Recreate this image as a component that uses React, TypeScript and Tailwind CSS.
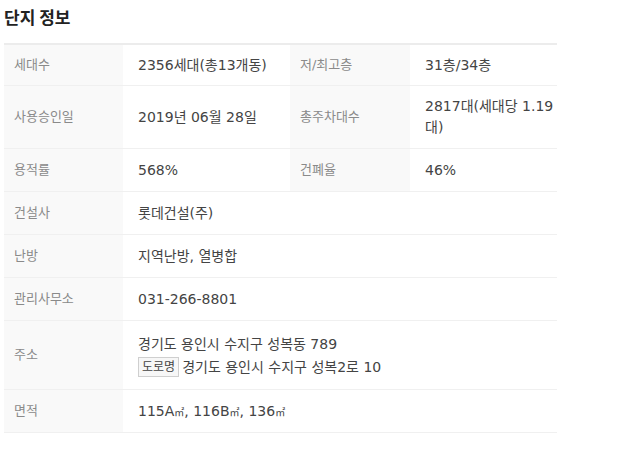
const FONT = "font-['DejaVu_Sans','Noto_Sans_CJK_KR',sans-serif]";

type Cell = { label: string; value: React.ReactNode };

function Label({ children }: { children: React.ReactNode }) {
  return (
    <div className="bg-[#f9f9f9] pl-[10px] flex items-center text-[13px] text-[#8a8a8a]">{children}</div>
  );
}

function Value({ children, wide }: { children: React.ReactNode; wide?: boolean }) {
  return (
    <div className={`pl-[15px] pr-2 flex items-center text-[14px] text-[#444] ${wide ? "col-span-3" : ""}`}>
      {children}
    </div>
  );
}

function Row({ cells, h }: { cells: Cell[]; h: string }) {
  return (
    <div className={`grid grid-cols-[119px_167px_120px_147px] border-b border-[#f0f0f0] ${h}`}>
      {cells.map((c) => (
        <>
          <Label key={c.label}>{c.label}</Label>
          <Value wide={cells.length === 1}>{c.value}</Value>
        </>
      ))}
    </div>
  );
}

export default function App() {
  return (
    <div className={`w-[640px] h-[450px] bg-white px-[4px] pt-[5px] ${FONT}`}>
      <h2 className="text-[17px] font-bold text-[#222] leading-[24px] font-['Noto_Sans_CJK_KR',sans-serif]">
        단지 정보
      </h2>
      <div className="mt-[14px] w-[553px] border-t-2 border-[#ececec]">
        <Row
          h="h-[41px]"
          cells={[
            { label: "세대수", value: "2356세대(총13개동)" },
            { label: "저/최고층", value: "31층/34층" },
          ]}
        />
        <Row
          h="h-[63px]"
          cells={[
            { label: "사용승인일", value: "2019년 06월 28일" },
            {
              label: "총주차대수",
              value: (
                <span className="leading-[21px] whitespace-nowrap">
                  2817대(세대당 1.19
                  <br />
                  대)
                </span>
              ),
            },
          ]}
        />
        <Row
          h="h-[43px]"
          cells={[
            { label: "용적률", value: "568%" },
            { label: "건폐율", value: "46%" },
          ]}
        />
        <Row h="h-[43px]" cells={[{ label: "건설사", value: "롯데건설(주)" }]} />
        <Row h="h-[43px]" cells={[{ label: "난방", value: "지역난방, 열병합" }]} />
        <Row h="h-[43px]" cells={[{ label: "관리사무소", value: "031-266-8801" }]} />
        <Row
          h="h-[69px]"
          cells={[
            {
              label: "주소",
              value: (
                <div className="flex flex-col gap-[3px]">
                  <span className="leading-[20px]">경기도 용인시 수지구 성복동 789</span>
                  <span className="flex items-center leading-[20px]">
                    <span className="mr-[3px] border border-[#cfcfcf] bg-[#f7f7f7] px-[3px] text-[12px] leading-[18px] text-[#444]">
                      도로명
                    </span>
                    경기도 용인시 수지구 성복2로 10
                  </span>
                </div>
              ),
            },
          ]}
        />
        <Row
          h="h-[43px]"
          cells={[
            {
              label: "면적",
              value: (
                <span>
                  115A<span className="text-[10px]">㎡</span>, 116B<span className="text-[10px]">㎡</span>, 136
                  <span className="text-[10px]">㎡</span>
                </span>
              ),
            },
          ]}
        />
      </div>
    </div>
  );
}
